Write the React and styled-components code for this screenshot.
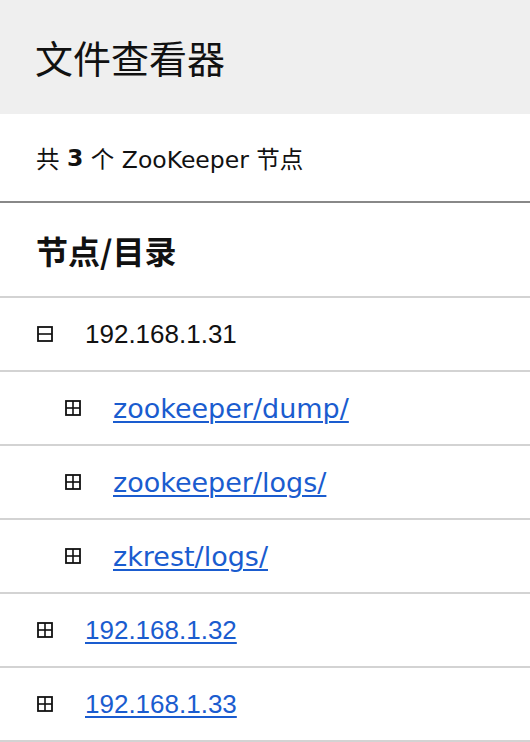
import React from "react";
import styled, { createGlobalStyle } from "styled-components";

const Global = createGlobalStyle`
  html, body { margin: 0; padding: 0; background: #fff; }
  body { font-family: "Liberation Sans", "Noto Sans CJK SC", sans-serif; color: #111; }
`;

const Page = styled.div`
  width: 530px;
  display: flex;
  flex-direction: column;
`;

const Header = styled.header`
  height: 114px;
  background: #efefef;
  display: flex;
  align-items: center;
  padding-left: 35px;
  box-sizing: border-box;
`;

const Title = styled.h1`
  margin: 0;
  font-family: "Noto Sans CJK SC", sans-serif;
  font-weight: 400;
  font-size: 38px;
  line-height: 1;
  color: #111;
`;

const Summary = styled.div`
  height: 89px;
  box-sizing: border-box;
  border-bottom: 2px solid #888;
  display: flex;
  align-items: center;
  padding-left: 36px;
  font-family: "DejaVu Sans", "Noto Sans CJK SC", sans-serif;
  font-size: 23.5px;
  color: #111;
  white-space: pre;
`;

const Count = styled.b`
  font-weight: 700;
`;

const Heading = styled.div`
  height: 95px;
  box-sizing: border-box;
  border-bottom: 2px solid #d3d3d3;
  display: flex;
  align-items: center;
  padding-left: 36px;
  font-family: "Noto Sans CJK SC", sans-serif;
  font-weight: 700;
  font-size: 32px;
  color: #111;
`;

const Row = styled.div`
  height: 74px;
  box-sizing: border-box;
  border-bottom: 2px solid #d3d3d3;
  display: flex;
  align-items: center;
  padding-left: ${(p) => 37 + p.$depth * 28}px;
`;

const Toggle = styled.svg`
  width: 16px;
  height: 16px;
  flex: none;
  margin-right: 32px;
`;

const Label = styled.span`
  font-family: "Liberation Sans", "Noto Sans CJK SC", sans-serif;
  font-size: 26px;
  color: #111;
`;

const Link = styled.a`
  font-family: ${(p) =>
    p.$path
      ? `"DejaVu Sans", "Noto Sans CJK SC", sans-serif`
      : `"Liberation Sans", "Noto Sans CJK SC", sans-serif`};
  font-size: ${(p) => (p.$path ? 27 : 26)}px;
  color: #1a5ccf;
  text-decoration: underline;
  text-decoration-thickness: 2px;
  text-underline-offset: 3px;
`;

function ToggleIcon({ open }) {
  return (
    <Toggle viewBox="0 0 16 16">
      <rect x="1" y="1" width="14" height="14" fill="none" stroke="#111" strokeWidth="1.8" />
      <line x1="1" y1="8" x2="15" y2="8" stroke="#111" strokeWidth="1.6" />
      {!open && <line x1="8" y1="1" x2="8" y2="15" stroke="#111" strokeWidth="1.6" />}
    </Toggle>
  );
}

const rows = [
  { depth: 0, name: "192.168.1.31", open: true, link: false },
  { depth: 1, name: "zookeeper/dump/", open: false, link: true, path: true },
  { depth: 1, name: "zookeeper/logs/", open: false, link: true, path: true },
  { depth: 1, name: "zkrest/logs/", open: false, link: true, path: true },
  { depth: 0, name: "192.168.1.32", open: false, link: true },
  { depth: 0, name: "192.168.1.33", open: false, link: true },
];

export default function App() {
  return (
    <Page>
      <Global />
      <Header>
        <Title>文件查看器</Title>
      </Header>
      <Summary>
        共 <Count>3</Count> 个 ZooKeeper 节点
      </Summary>
      <Heading>节点/目录</Heading>
      {rows.map((r, i) => (
        <Row key={i} $depth={r.depth}>
          <ToggleIcon open={r.open} />
          {r.link ? (
            <Link href="#" $path={r.path}>
              {r.name}
            </Link>
          ) : (
            <Label>{r.name}</Label>
          )}
        </Row>
      ))}
    </Page>
  );
}
